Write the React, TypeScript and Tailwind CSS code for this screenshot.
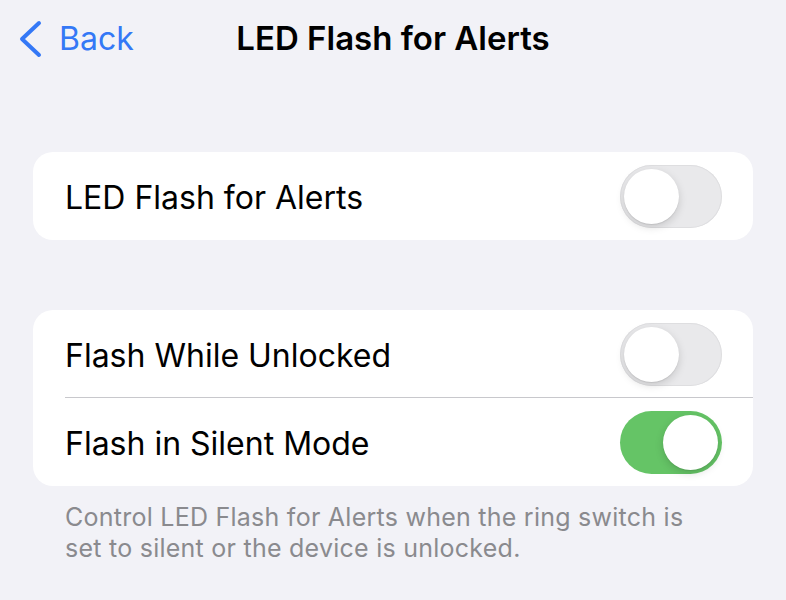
function Toggle({ on }: { on: boolean }) {
  return (
    <div
      className={
        on
          ? 'flex h-[63px] w-[102px] items-center justify-end rounded-full bg-[#65c466] p-[4px]'
          : 'flex h-[63px] w-[102px] items-center justify-start rounded-full bg-[#e9e9eb] p-[4px] shadow-[inset_0_0_0_1px_#dedee0]'
      }
    >
      <div className="h-[55px] w-[55px] rounded-full bg-white shadow-[0_3px_8px_rgba(0,0,0,0.15),0_1px_1px_rgba(0,0,0,0.08)]" />
    </div>
  );
}

function Row({ label, on, divider }: { label: string; on: boolean; divider?: boolean }) {
  return (
    <div className="relative flex h-[88px] items-center justify-between pl-[32px] pr-[31px]">
      <span className="pt-[3px] text-[32px] text-black">{label}</span>
      <Toggle on={on} />
      {divider && <div className="absolute bottom-0 left-[32px] right-0 h-px bg-[#c8c8cc]" />}
    </div>
  );
}

export default function App() {
  return (
    <div className="h-[600px] w-[786px] overflow-hidden bg-[#f2f2f7] font-['Inter',sans-serif]">
      <header className="relative flex h-[78px] items-center">
        <div className="flex items-center pl-[18px] text-[#3478f6]">
          <svg width="26" height="38" viewBox="0 0 26 38" fill="none" stroke="currentColor" strokeWidth="4" strokeLinecap="round" strokeLinejoin="round">
            <polyline points="21,3 4,19 21,35" />
          </svg>
          <span className="ml-[15px] text-[32px]">Back</span>
        </div>
        <h1 className="absolute left-0 right-0 text-center text-[33px] font-semibold text-black">LED Flash for Alerts</h1>
      </header>

      <div className="px-[33px] pt-[74px]">
        <div className="overflow-hidden rounded-[20px] bg-white">
          <Row label="LED Flash for Alerts" on={false} />
        </div>

        <div className="mt-[70px] overflow-hidden rounded-[20px] bg-white">
          <Row label="Flash While Unlocked" on={false} divider />
          <Row label="Flash in Silent Mode" on={true} />
        </div>

        <p className="mt-[16px] pl-[32px] pr-[50px] text-[25px] leading-[31px] tracking-[0.01em] text-[#8a8a8e]">
          Control LED Flash for Alerts when the ring switch is set to silent or the device is unlocked.
        </p>
      </div>
    </div>
  );
}
